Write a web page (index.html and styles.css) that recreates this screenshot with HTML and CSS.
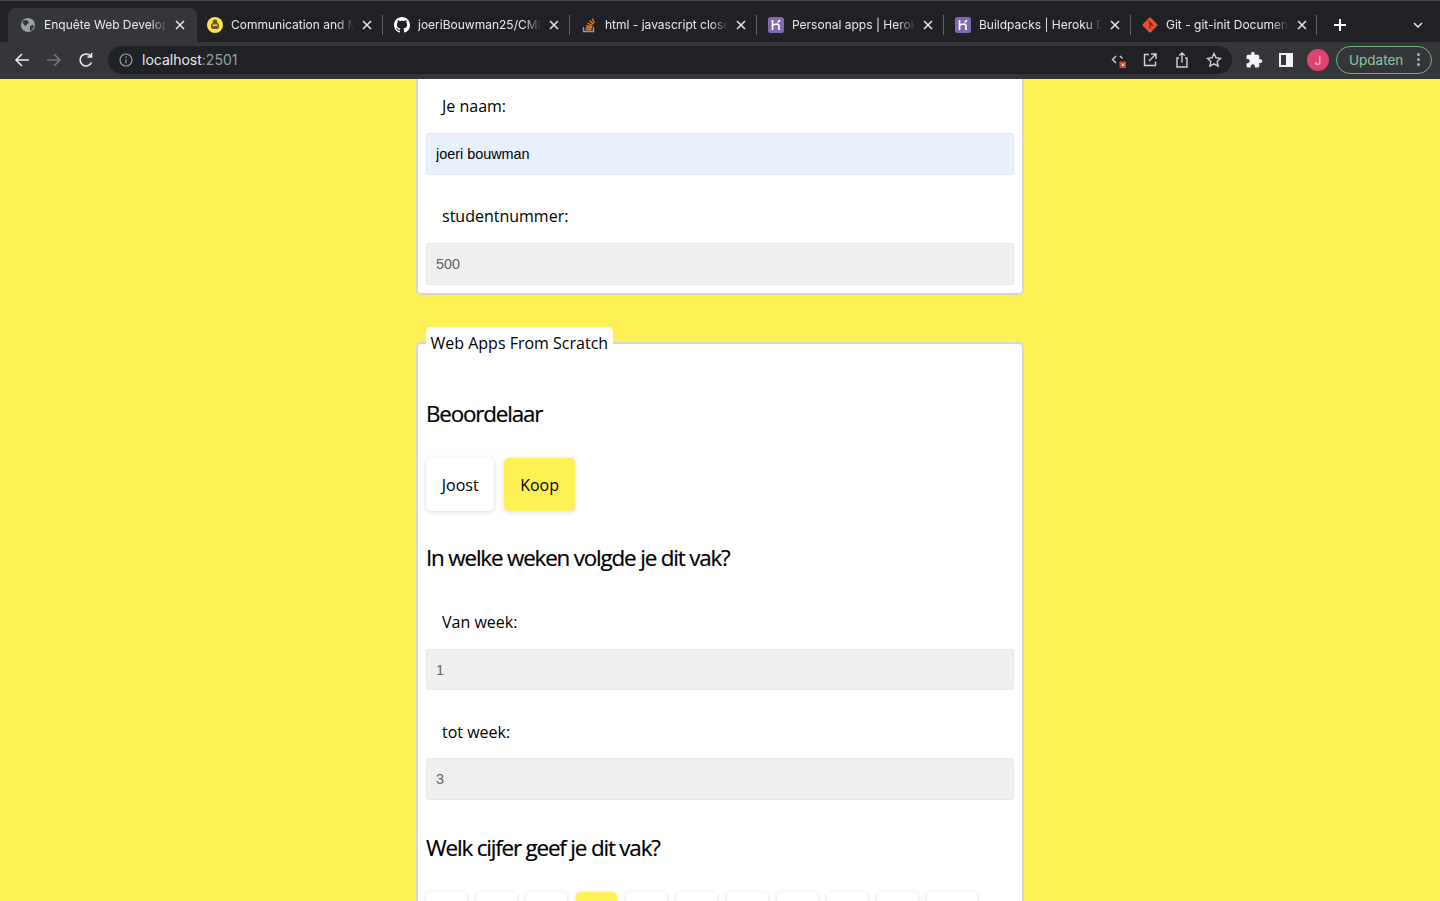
FILE: index.html
```html
<!DOCTYPE html>
<html lang="nl">
<head>
<meta charset="utf-8">
<title>Enquête Web Development</title>
<link rel="stylesheet" href="styles.css">
</head>
<body>
<header class="chrome">
  <div class="tabstrip">
    <div class="tab active">
      <svg class="fav" viewBox="0 0 16 16"><circle cx="8" cy="8" r="7" fill="#9aa0a6"/><path d="M3 4l3-1 2 1 1 2-2 1-1 2-2-1-1-2zM10 9l3-1 1 1-2 4-2 1z" fill="#35363a"/></svg>
      <span class="tabtitle">Enquête Web Development</span>
      <svg class="close" viewBox="0 0 10 10"><path d="M1 1l8 8M9 1l-8 8"/></svg>
    </div>
    <div class="tab sep">
      <svg class="fav" viewBox="0 0 16 16"><circle cx="8" cy="8" r="8" fill="#fbe14b"/><rect x="4" y="6" width="8" height="6" rx="2" fill="#6b5a20"/><circle cx="8" cy="5" r="2.4" fill="#6b5a20"/><rect x="5.5" y="7.5" width="5" height="1.4" fill="#fbe14b"/></svg>
      <span class="tabtitle">Communication and Multimedia</span>
      <svg class="close" viewBox="0 0 10 10"><path d="M1 1l8 8M9 1l-8 8"/></svg>
    </div>
    <div class="tab sep">
      <svg class="fav" viewBox="0 0 16 16"><path fill="#fff" d="M8 0C3.58 0 0 3.58 0 8c0 3.54 2.29 6.53 5.47 7.59.4.07.55-.17.55-.38 0-.19-.01-.82-.01-1.49-2.01.37-2.53-.49-2.69-.94-.09-.23-.48-.94-.82-1.13-.28-.15-.68-.52-.01-.53.63-.01 1.08.58 1.23.82.72 1.21 1.87.87 2.33.66.07-.52.28-.87.51-1.07-1.78-.2-3.64-.89-3.64-3.95 0-.87.31-1.59.82-2.15-.08-.2-.36-1.02.08-2.12 0 0 .67-.21 2.2.82.64-.18 1.32-.27 2-.27s1.36.09 2 .27c1.53-1.04 2.2-.82 2.2-.82.44 1.1.16 1.92.08 2.12.51.56.82 1.27.82 2.15 0 3.07-1.87 3.75-3.65 3.95.29.25.54.73.54 1.48 0 1.07-.01 1.93-.01 2.2 0 .21.15.46.55.38A8.01 8.01 0 0 0 16 8c0-4.42-3.58-8-8-8z"/></svg>
      <span class="tabtitle">joeriBouwman25/CMD-project</span>
      <svg class="close" viewBox="0 0 10 10"><path d="M1 1l8 8M9 1l-8 8"/></svg>
    </div>
    <div class="tab sep">
      <svg class="fav" viewBox="0 0 16 16"><path d="M2.5 10v4.5h10V10" fill="none" stroke="#9a9a9a" stroke-width="1.4"/><path d="M4.5 12.5h6M4.8 10.5l6 .4M5.3 8.5l5.8 1.4M6.5 6l5 2.6M8.6 3.6l3.9 3.6M11.3 1.5l2 4.6" stroke="#e87c25" stroke-width="1.3" fill="none"/></svg>
      <span class="tabtitle">html - javascript close window</span>
      <svg class="close" viewBox="0 0 10 10"><path d="M1 1l8 8M9 1l-8 8"/></svg>
    </div>
    <div class="tab sep">
      <svg class="fav" viewBox="0 0 16 16"><rect width="16" height="16" rx="2.500" fill="#8068b5"/><path d="M4.500 3v10M4.500 8.500c2-1.500 6-2 6.500 0V13M12 3l-2.200 2.500" stroke="#fff" stroke-width="1.700" fill="none"/></svg>
      <span class="tabtitle">Personal apps | Heroku</span>
      <svg class="close" viewBox="0 0 10 10"><path d="M1 1l8 8M9 1l-8 8"/></svg>
    </div>
    <div class="tab sep">
      <svg class="fav" viewBox="0 0 16 16"><rect width="16" height="16" rx="2.500" fill="#8068b5"/><path d="M4.500 3v10M4.500 8.500c2-1.500 6-2 6.500 0V13M12 3l-2.200 2.500" stroke="#fff" stroke-width="1.700" fill="none"/></svg>
      <span class="tabtitle">Buildpacks | Heroku Dev Center</span>
      <svg class="close" viewBox="0 0 10 10"><path d="M1 1l8 8M9 1l-8 8"/></svg>
    </div>
    <div class="tab sep last">
      <svg class="fav" viewBox="0 0 16 16"><rect x="2.300" y="2.300" width="11.400" height="11.400" rx="1.200" transform="rotate(45 8 8)" fill="#e84e31"/><path d="M6 3.500l4 4M8 6v5.500M8 6l3 3" stroke="#35200f" stroke-width="1" fill="none"/></svg>
      <span class="tabtitle">Git - git-init Documentation</span>
      <svg class="close" viewBox="0 0 10 10"><path d="M1 1l8 8M9 1l-8 8"/></svg>
    </div>
    <svg class="newtab" viewBox="0 0 12 12"><path d="M6 0v12M0 6h12"/></svg>
    <svg class="tabmenu" viewBox="0 0 10 6"><path d="M1 1l4 4 4-4"/></svg>
  </div>
  <div class="toolbar">
    <svg class="navicon" viewBox="0 0 16 16"><path d="M15 8H2M8 2L2 8l6 6"/></svg>
    <svg class="navicon dim" viewBox="0 0 16 16"><path d="M1 8h13M8 2l6 6-6 6"/></svg>
    <svg class="navicon" viewBox="0 0 16 16"><path d="M13.500 10.500A6 6 0 1 1 13 4.500M13.500 1v4h-4"/></svg>
    <div class="omnibox">
      <svg class="info" viewBox="0 0 14 14"><circle cx="7" cy="7" r="6"/><path d="M7 6.200v4M7 3.600v1.400"/></svg>
      <span class="url">localhost<span class="port">:2501</span></span>
      <div class="omni-actions">
        <svg class="omni-svg" viewBox="0 0 16 16"><path d="M6 4L2.500 7.500 6 11M10 4l2.500 2.500"/><rect class="blocked" x="9.500" y="9.500" width="6.500" height="6.500"/><path class="blocked-x" d="M11.500 11.500l2.500 2.500M14 11.500l-2.500 2.500"/></svg>
        <svg class="omni-svg" viewBox="0 0 16 16"><path d="M13.500 9.500V13.500H2.500V2.500h4.500M9 2h5v5M14 2L7 9"/></svg>
        <svg class="omni-svg" viewBox="0 0 16 16"><path d="M5 6H3v9h10V6h-2M8 10.500V1M5.200 3.500L8 1l2.800 2.500"/></svg>
        <svg class="omni-svg" viewBox="0 0 16 16"><path d="M8 1.500l2 4.300 4.600.6-3.400 3.200.9 4.600L8 11.900l-4.100 2.300.9-4.600L1.400 6.400 6 5.800z"/></svg>
      </div>
    </div>
    <div class="tool-right">
      <svg class="ext" viewBox="0 0 24 24"><path d="M20.500 11H19V7c0-1.100-.9-2-2-2h-4V3.500C13 2.120 11.880 1 10.500 1S8 2.120 8 3.500V5H4c-1.100 0-1.990.9-1.990 2v3.800H3.500c1.490 0 2.700 1.210 2.700 2.700s-1.210 2.700-2.700 2.700H2V20c0 1.100.9 2 2 2h3.800v-1.500c0-1.490 1.210-2.700 2.700-2.700 1.490 0 2.700 1.210 2.700 2.700V22H17c1.100 0 2-.9 2-2v-4h1.500c1.380 0 2.500-1.120 2.500-2.500S21.880 11 20.500 11z"/></svg>
      <span class="sidepanel"><span class="sidepanel-fill"></span></span>
      <span class="avatar">J</span>
      <span class="update">Updaten<span class="dots"><i></i><i></i><i></i></span></span>
    </div>
  </div>
</header>
<main class="page">
  <section class="card first">
    <label class="field-label">Je naam:</label>
    <input class="text-input autofill" value="joeri bouwman">
    <label class="field-label">studentnummer:</label>
    <input class="text-input" value="500">
  </section>
  <section class="card second">
    <h3 class="legend">Web Apps From Scratch</h3>
    <h2 class="heading beoordelaar">Beoordelaar</h2>
    <div class="choices">
      <button class="choice">Joost</button>
      <button class="choice selected">Koop</button>
    </div>
    <h2 class="heading weken">In welke weken volgde je dit vak?</h2>
    <label class="field-label">Van week:</label>
    <input class="text-input week-from" value="1">
    <label class="field-label">tot week:</label>
    <input class="text-input week-to" value="3">
    <h2 class="heading cijfer">Welk cijfer geef je dit vak?</h2>
    <div class="grades">
      <button class="grade">0</button>
      <button class="grade">1</button>
      <button class="grade">2</button>
      <button class="grade selected">3</button>
      <button class="grade">4</button>
      <button class="grade">5</button>
      <button class="grade">6</button>
      <button class="grade">7</button>
      <button class="grade">8</button>
      <button class="grade">9</button>
      <button class="grade">10</button>
    </div>
  </section>
</main>
</body>
</html>
```
FILE: styles.css
```css
* { box-sizing: border-box; }
html, body { margin: 0; height: 901px; overflow: hidden; }
body { background: #fff056; font-family: "Open Sans", sans-serif; color: #000; }

.chrome { height: 79px; background: #35363a; border-top: 1px solid #4a4a4c; font-family: Inter, "Liberation Sans", sans-serif; }
.tabstrip { height: 41px; background: #202124; display: flex; align-items: flex-end; padding: 7px 0 0 8px; position: relative; }
.tab { width: 187px; height: 34px; display: flex; align-items: center; padding: 0 0 0 12px; position: relative; flex: none; }
.tab.active { width: 189px; margin-right: -2px; background: #35363a; border-radius: 8px 8px 0 0; }
.tab.sep::before { content: ""; width: 1px; height: 20px; background: #5f6368; position: absolute; left: 0; top: 7px; }
.tab.sep:nth-child(2)::before { display: none; }
.tab.last::after { content: ""; width: 1px; height: 20px; background: #5f6368; position: absolute; right: 0; top: 7px; }
.fav { width: 16px; height: 16px; flex: none; }
.tabtitle { width: 123px; margin: 0 0 2px 8px; font-size: 12px; color: #e8eaed; white-space: nowrap; overflow: hidden; -webkit-mask-image: linear-gradient(90deg, #000 86%, transparent 100%); mask-image: linear-gradient(90deg, #000 86%, transparent 100%); }
.close { width: 10px; height: 10px; margin-left: 8px; fill: none; stroke: #e8eaed; stroke-width: 1.5; flex: none; }
.newtab { width: 12px; height: 12px; margin: 0 0 11px 17px; fill: none; stroke: #fff; stroke-width: 2; flex: none; }
.tabmenu { width: 10px; height: 6px; position: absolute; right: 17px; top: 21px; fill: none; stroke: #e8eaed; stroke-width: 1.5; }

.toolbar { height: 37px; display: flex; align-items: center; padding: 0 8px 1px 14px; gap: 0; }
.navicon { width: 16px; height: 16px; margin-right: 16px; fill: none; stroke: #e8eaed; stroke-width: 1.6; flex: none; }
.navicon.dim { stroke: #76787c; }
.navicon:nth-child(3) { margin-right: 14px; }
.omnibox { width: 1124px; height: 28px; background: #202124; border-radius: 14px; display: flex; align-items: center; padding: 0 10px 0 11px; flex: none; }
.info { width: 14px; height: 14px; fill: none; stroke: #9aa0a6; stroke-width: 1.2; flex: none; }
.url { margin: 0 0 1px 9px; font-size: 14px; color: #e8eaed; }
.port { color: #9aa0a6; }
.omni-actions { margin-left: auto; display: flex; align-items: center; gap: 16px; }
.omni-svg { width: 16px; height: 16px; fill: none; stroke: #d0d3d5; stroke-width: 1.400; display: block; }
.omni-svg .blocked { fill: #d0453a; stroke: none; }
.omni-svg .blocked-x { stroke: #fff; stroke-width: 1; }
.tool-right { display: flex; align-items: center; margin-left: 13px; flex: none; }
.ext { width: 18px; height: 18px; fill: #f1f3f4; flex: none; }
.sidepanel { width: 14px; height: 14px; margin-left: 16px; border: 2px solid #f1f3f4; display: flex; justify-content: flex-end; flex: none; }
.sidepanel-fill { width: 5px; background: #f1f3f4; }
.avatar { width: 22px; height: 22px; margin-left: 14px; border-radius: 50%; background: #e0436f; color: #f7cdd9; font-size: 12px; display: flex; align-items: center; justify-content: center; flex: none; }
.update { width: 96px; height: 28px; margin-left: 7px; border: 1px solid #6fb384; border-radius: 14px; color: #8ec79f; font-size: 13.5px; display: flex; align-items: center; padding-left: 12px; position: relative; flex: none; }
.dots { position: absolute; right: 11px; top: 6px; display: flex; flex-direction: column; gap: 2px; }
.dots i { width: 3px; height: 3px; border-radius: 50%; background: #8ec79f; display: block; }

.page { height: 822px; overflow: hidden; display: flex; flex-direction: column; align-items: center; }
.card { width: 608px; background: #fff; border: 2px solid #d6d6d6; border-radius: 5px; padding: 0 8px; flex: none; position: relative; }
.card.first { height: 216px; border-top: 0; border-radius: 0 0 5px 5px; padding-top: 5px; }
.card.second { margin-top: 47px; height: 700px; padding-top: 54px; }
.legend { position: absolute; left: 8px; top: -17px; margin: 0; padding: 0 4.500px; height: 31px; background: #fff; border-radius: 5px 5px 0 0; font-size: 16px; font-weight: 400; line-height: 32px; }
.field-label { display: block; height: 44px; padding: 0 16px; font-size: 16px; line-height: 44px; }
.text-input { display: block; width: 100%; height: 42px; margin: 5px 0 19px; padding: 0 9px; background: #efefef; border: 1px solid #e6e6e6; border-radius: 3px; font: 14.4px "Liberation Sans", Arial, sans-serif; color: #5f5f5f; }
.text-input.autofill { background: #e8f0fe; border-color: #e0e7f3; color: #000; }
.text-input.week-from { height: 41px; margin-bottom: 20px; }
.text-input.week-to { margin-top: 4px; }
.heading { margin: 0; font-size: 22.4px; font-weight: 400; line-height: 32px; letter-spacing: -1.170px; -webkit-text-stroke: 0.2px #000; }
.choices { display: flex; gap: 10px; margin-top: 28px; }
.choice { height: 53px; padding: 0 15.750px; background: #fff; border: 0; border-radius: 5px; box-shadow: 0 1px 5px rgba(0,0,0,.14); font: 16px "Open Sans", sans-serif; color: #000; }
.choice.selected, .grade.selected { background: #fff056; }
.heading.weken { margin-top: 31px; margin-bottom: 26px; }
.heading.cijfer { margin-top: 32px; }
.grades { display: flex; gap: 9.100px; margin-top: 28px; }
.grade { width: 41px; height: 53px; background: #fff; border: 0; border-radius: 5px; box-shadow: 0 1px 5px rgba(0,0,0,.14); font: 16px "Open Sans", sans-serif; color: #000; flex: none; }
.grade:last-child { width: 50px; }
```
